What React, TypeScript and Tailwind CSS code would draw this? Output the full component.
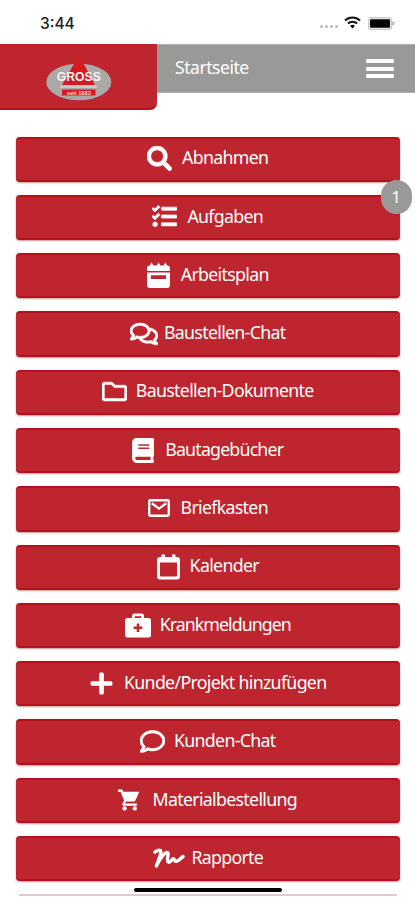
import type { ReactNode } from "react";
import { FaBook, FaPlus, FaRegComment, FaRegComments, FaRegFolder, FaSearch, FaTasks } from "react-icons/fa";

type MenuItem = {
  label: string;
  icon: ReactNode;
  gap: string;
  tracking?: string;
  badge?: number;
};

const PlannerIcon = () => (
  <svg width="23" height="26" viewBox="0 0 23 26" fill="currentColor">
    <path fillRule="evenodd" d="M3 3.5L4.5 .3L6.5 3.5H9.8L11.5 .3L13.2 3.5H16.5L18.5 .3L20 3.5Q23 3.5 23 6.8V9H0V6.8Q0 3.5 3 3.5ZM0 10.5H23V23Q23 26 20 26H3Q0 26 0 23ZM4 13.2V17H19V13.2Z" />
  </svg>
);

const CalendarIcon = () => (
  <svg width="23" height="26" viewBox="0 0 23 26" fill="currentColor">
    <path fillRule="evenodd" d="M4.5 3V.6H8V3H15V.6H18.5V3H20Q23 3 23 6V22.5Q23 25.5 20 25.5H3Q0 25.5 0 22.5V6Q0 3 3 3ZM3 8.5V21.5Q3 22.5 4 22.5H19Q20 22.5 20 21.5V8.5Z" />
  </svg>
);

const MailIcon = () => (
  <svg width="22" height="18" viewBox="0 0 22 18" fill="none" stroke="currentColor" strokeWidth="2.4" strokeLinejoin="round">
    <rect x="1.2" y="1.2" width="19.6" height="15.6" rx="1.2" />
    <path d="M3.8 4.2L11 9.6L18.2 4.2" />
  </svg>
);

const MedkitIcon = () => (
  <svg width="26" height="25" viewBox="0 0 26 25" fill="currentColor">
    <path fillRule="evenodd" d="M2.5 5H7V3Q7 .5 9.5 .5H16.5Q19 .5 19 3V5H23.5Q26 5 26 7.5V22Q26 24.5 23.5 24.5H2.5Q0 24.5 0 22V7.5Q0 5 2.5 5ZM9.7 5H16.3V3.2H9.7ZM11.7 10.5V13.4H8.6V16H11.7V19H14.3V16H17.4V13.4H14.3V10.5Z" />
  </svg>
);

const CartIcon = () => (
  <svg width="22" height="22" viewBox="0 0 22 22" fill="currentColor">
    <path d="M0 .5H4.4L5.5 2.7H21.3L17.3 11.8Q17 12.6 16.1 12.6H8.2L7.2 14.4H19V16.7H5.6Q3.6 16.4 4.6 14.2L6.1 11.5L2.6 3H0Z" />
    <circle cx="6.6" cy="19.4" r="2.2" />
    <circle cx="16.8" cy="19.4" r="2.2" />
  </svg>
);

const SignIcon = () => (
  <svg width="32" height="21" viewBox="0 0 32 21" fill="none" stroke="currentColor" strokeWidth="3.4" strokeLinecap="round" strokeLinejoin="round">
    <path d="M2 4.2C4 2 8.5.9 7.8 4.7C7.2 8.5 4.5 14.5 3.4 18C6.5 11 11.5 4.5 14 4.5C17 4.5 12.5 13.5 15.5 14.2C18 14.7 18.7 10.8 20.3 10.8C21.8 10.8 21 13.4 23 13.4C25.3 13.4 27.8 10 30 8.5" />
  </svg>
);

const MENU: MenuItem[] = [
  { label: "Abnahmen", icon: <FaSearch size={25} className="stroke-white stroke-[12]" />, gap: "gap-[10px]" },
  { label: "Aufgaben", icon: <FaTasks size={25} className="stroke-white stroke-[14]" />, gap: "gap-[10px]", badge: 1 },
  { label: "Arbeitsplan", icon: <PlannerIcon />, gap: "gap-[11px]" },
  { label: "Baustellen-Chat", icon: <FaRegComments size={28} className="stroke-white stroke-[12]" />, gap: "gap-[6px]" },
  { label: "Baustellen-Dokumente", icon: <FaRegFolder size={25} className="stroke-white stroke-[12]" />, gap: "gap-[9px]" },
  { label: "Bautagebücher", icon: <FaBook size={25} className="w-[22px]" />, gap: "gap-[11px]", tracking: "tracking-[-0.8px]" },
  { label: "Briefkasten", icon: <MailIcon />, gap: "gap-[11px]" },
  { label: "Kalender", icon: <CalendarIcon />, gap: "gap-[10px]" },
  { label: "Krankmeldungen", icon: <MedkitIcon />, gap: "gap-[9px]", tracking: "tracking-[-0.95px]" },
  { label: "Kunde/Projekt hinzufügen", icon: <FaPlus size={25} />, gap: "gap-[10px]" },
  { label: "Kunden-Chat", icon: <FaRegComment size={25} className="stroke-white stroke-[14]" />, gap: "gap-[9px]" },
  { label: "Materialbestellung", icon: <CartIcon />, gap: "gap-[12px]" },
  { label: "Rapporte", icon: <SignIcon />, gap: "gap-[7px]", tracking: "tracking-[-0.75px]" },
];

function StatusBar() {
  return (
    <div className="flex h-[44px] items-center justify-between pr-[20px] pl-[40px]">
      <span className="pt-[3px] font-['Inter'] text-[15.5px] font-medium text-[#222]">3:44</span>
      <div className="flex items-center">
        <div className="mt-[9px] mr-[6px] flex gap-[2px]">
          {[0, 1, 2, 3].map((i) => (
            <span key={i} className="size-[3px] rounded-full bg-[#b9b9b9]" />
          ))}
        </div>
        <svg className="mt-[1px] mr-[7px]" width="17" height="13" viewBox="0 0 17 13" fill="none" stroke="#111" strokeWidth="2.1">
          <path d="M1 4.6C5.2.4 11.8.4 16 4.6" />
          <path d="M3.9 7.6C6.5 5.1 10.5 5.1 13.1 7.6" />
          <path d="M6 9.8Q8.5 7.8 11 9.8L8.5 12.4Z" fill="#111" stroke="none" />
        </svg>
        <svg className="mt-[2px]" width="27" height="13" viewBox="0 0 27 13">
          <rect x=".7" y=".7" width="22.6" height="11.6" rx="2.5" fill="#fff" stroke="#c9c9c9" strokeWidth="1.4" />
          <rect x="2" y="2.2" width="20" height="8.6" rx="1" fill="#050505" />
          <path d="M24.2 4Q26.6 4.8 26.6 6.5Q26.6 8.2 24.2 9Z" fill="#bbb" />
        </svg>
      </div>
    </div>
  );
}

function Logo() {
  return (
    <svg className="mt-[10px] ml-[46px]" width="66" height="48" viewBox="0 0 66 48">
      <ellipse cx="32.8" cy="28" rx="32.5" ry="18.3" fill="#aaa9a8" />
      <path d="M33 1L49 31H16Z" fill="#d51b22" />
      <path d="M14.5 31.3H50.5L51.5 34H13.5Z" fill="#c9c8c7" />
      <rect x="16" y="35.5" width="33.5" height="6" fill="#d51b22" />
      <text x="32.8" y="27" textAnchor="middle" textLength="44" lengthAdjust="spacingAndGlyphs" fill="#f5f3f2" fontFamily="Liberation Sans" fontSize="13" fontWeight="700">GROSS</text>
      <text x="32.8" y="40.6" textAnchor="middle" textLength="24" lengthAdjust="spacingAndGlyphs" fill="#f1d5d3" fontFamily="Liberation Sans" fontSize="5.5" fontWeight="700">seit 1883</text>
    </svg>
  );
}

function Header() {
  return (
    <header className="flex h-[66px] items-start">
      <div className="h-[66px] w-[157px] shrink-0 rounded-br-[7px] border-b-2 border-[#b71119] bg-[#be252e]">
        <Logo />
      </div>
      <div className="flex h-[49px] flex-1 items-center justify-between border-t border-b border-[#b0b0ae] bg-[#999997] pr-[21px] pl-[18px]">
        <span className="-mt-[1px] text-[17.5px] leading-none tracking-[-0.45px] text-white">Startseite</span>
        <div className="flex flex-col gap-[3.5px]">
          <span className="h-[4px] w-[28px] rounded-[1px] bg-white" />
          <span className="h-[4px] w-[28px] rounded-[1px] bg-white" />
          <span className="h-[4px] w-[28px] rounded-[1px] bg-white" />
        </div>
      </div>
    </header>
  );
}

function MenuButton({ item }: { item: MenuItem }) {
  return (
    <button
      className={`relative flex h-[45.3px] w-full shrink-0 items-center justify-center rounded-[4px] border-y-2 border-[#b5101b] bg-[#be252e] text-white shadow-[0_1px_2px_rgba(120,20,25,0.45)] ${item.gap}`}
    >
      <span className="-mt-[1px] shrink-0">{item.icon}</span>
      <span className={`-mt-[2px] text-[17.75px] leading-none whitespace-nowrap ${item.tracking ?? "tracking-[-0.68px]"}`}>
        {item.label}
      </span>
      {item.badge && (
        <span className="absolute -top-[17px] -right-[12px] flex h-[34px] w-[31px] items-center justify-center rounded-full bg-[#999997] text-[17px]">
          {item.badge}
        </span>
      )}
    </button>
  );
}

export default function App() {
  return (
    <div className="relative h-[900px] w-[415px] overflow-hidden bg-white font-['Noto_Sans',sans-serif]">
      <StatusBar />
      <Header />
      <main className="flex flex-col gap-[13px] pt-[26.5px] pr-[15.5px] pl-[16px]">
        {MENU.map((item) => (
          <MenuButton key={item.label} item={item} />
        ))}
        <div className="mx-[3px] h-[2px] bg-[#e5c9cd]" />
      </main>
      {/* Home indicator */}
      <div className="absolute top-[887.5px] left-[134px] h-[4.5px] w-[148px] rounded-full bg-black" />
    </div>
  );
}
